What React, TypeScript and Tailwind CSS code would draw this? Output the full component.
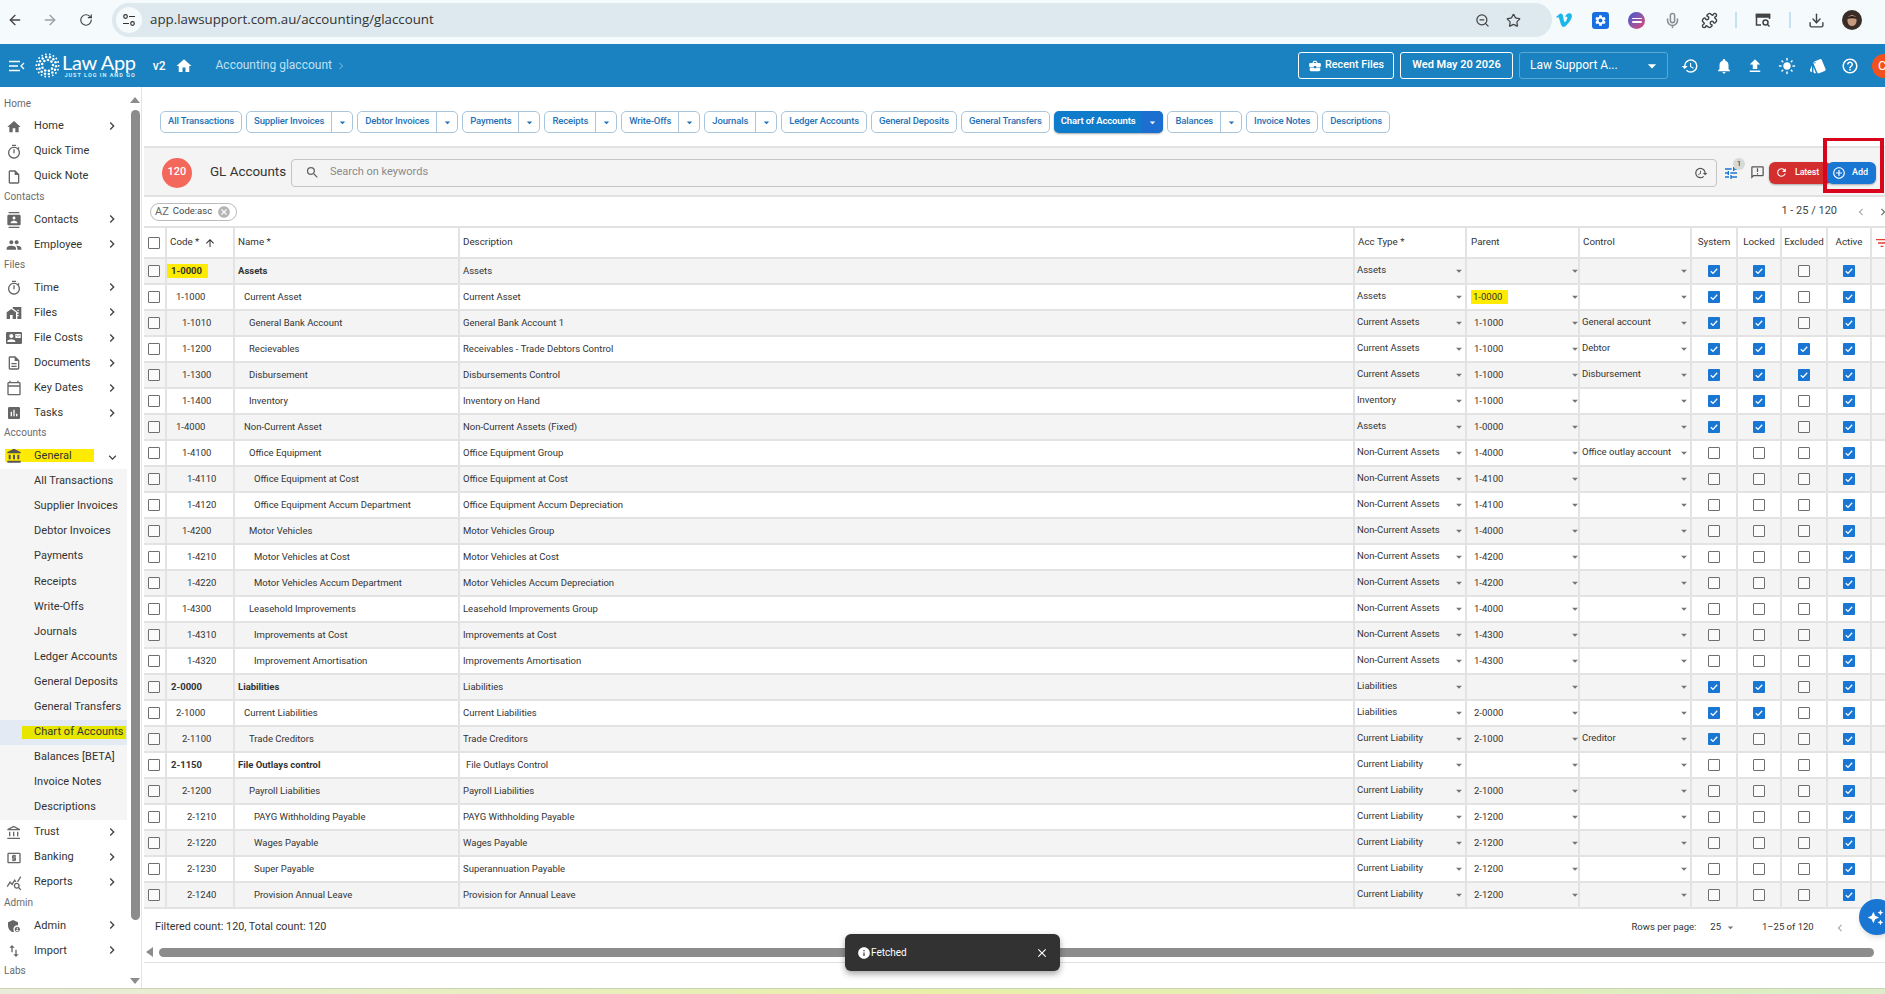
import { ArrowLeft, ArrowRight, Download, Mic, Puzzle, RotateCw, Star, ZoomOut } from "lucide-react";
import { FaVimeoV } from "react-icons/fa";
import {
  MdAccountBalance,
  MdAddCircleOutline,
  MdAdminPanelSettings,
  MdArrowDropDown,
  MdArrowUpward,
  MdAssessment,
  MdAutoAwesome,
  MdBusinessCenter,
  MdCancel,
  MdChevronLeft,
  MdChevronRight,
  MdClose,
  MdContactMail,
  MdContacts,
  MdExpandMore,
  MdFileUpload,
  MdFilterList,
  MdHelpOutline,
  MdHistory,
  MdHome,
  MdHomeWork,
  MdImportExport,
  MdInfo,
  MdLightMode,
  MdNotifications,
  MdOutlineAccountBalance,
  MdOutlineAnnouncement,
  MdOutlineCalendarToday,
  MdOutlineDescription,
  MdOutlineInsertDriveFile,
  MdOutlineLocalAtm,
  MdOutlineQueryStats,
  MdOutlineTimer,
  MdPeople,
  MdRefresh,
  MdSearch,
  MdSettings,
  MdStyle,
  MdTune,
} from "react-icons/md";
import type { IconType } from "react-icons";

type NavItem =
  | { kind: "label"; text: string }
  | { kind: "item"; text: string; icon: IconType; arrow?: boolean }
  | { kind: "group"; text: string; icon: IconType }
  | { kind: "sub"; text: string; active?: boolean };

const nav: NavItem[] = [
  { kind: "label", text: "Home" },
  { kind: "item", text: "Home", icon: MdHome, arrow: true },
  { kind: "item", text: "Quick Time", icon: MdOutlineTimer },
  { kind: "item", text: "Quick Note", icon: MdOutlineInsertDriveFile },
  { kind: "label", text: "Contacts" },
  { kind: "item", text: "Contacts", icon: MdContacts, arrow: true },
  { kind: "item", text: "Employee", icon: MdPeople, arrow: true },
  { kind: "label", text: "Files" },
  { kind: "item", text: "Time", icon: MdOutlineTimer, arrow: true },
  { kind: "item", text: "Files", icon: MdHomeWork, arrow: true },
  { kind: "item", text: "File Costs", icon: MdContactMail, arrow: true },
  { kind: "item", text: "Documents", icon: MdOutlineDescription, arrow: true },
  { kind: "item", text: "Key Dates", icon: MdOutlineCalendarToday, arrow: true },
  { kind: "item", text: "Tasks", icon: MdAssessment, arrow: true },
  { kind: "label", text: "Accounts" },
  { kind: "group", text: "General", icon: MdAccountBalance },
  { kind: "sub", text: "All Transactions" },
  { kind: "sub", text: "Supplier Invoices" },
  { kind: "sub", text: "Debtor Invoices" },
  { kind: "sub", text: "Payments" },
  { kind: "sub", text: "Receipts" },
  { kind: "sub", text: "Write-Offs" },
  { kind: "sub", text: "Journals" },
  { kind: "sub", text: "Ledger Accounts" },
  { kind: "sub", text: "General Deposits" },
  { kind: "sub", text: "General Transfers" },
  { kind: "sub", text: "Chart of Accounts", active: true },
  { kind: "sub", text: "Balances [BETA]" },
  { kind: "sub", text: "Invoice Notes" },
  { kind: "sub", text: "Descriptions" },
  { kind: "item", text: "Trust", icon: MdOutlineAccountBalance, arrow: true },
  { kind: "item", text: "Banking", icon: MdOutlineLocalAtm, arrow: true },
  { kind: "item", text: "Reports", icon: MdOutlineQueryStats, arrow: true },
  { kind: "label", text: "Admin" },
  { kind: "item", text: "Admin", icon: MdAdminPanelSettings, arrow: true },
  { kind: "item", text: "Import", icon: MdImportExport, arrow: true },
  { kind: "label", text: "Labs" },
];

const tabs = [
  { label: "All Transactions" },
  { label: "Supplier Invoices", split: true },
  { label: "Debtor Invoices", split: true },
  { label: "Payments", split: true },
  { label: "Receipts", split: true },
  { label: "Write-Offs", split: true },
  { label: "Journals", split: true },
  { label: "Ledger Accounts" },
  { label: "General Deposits" },
  { label: "General Transfers" },
  { label: "Chart of Accounts", split: true, active: true },
  { label: "Balances", split: true },
  { label: "Invoice Notes" },
  { label: "Descriptions" },
];

// code, name, description, acc type, parent, control, flags (system, locked, excluded, active), indent level
type Row = [string, string, string, string, string, string, string, number];

const CA = "Current Assets";
const NCA = "Non-Current Assets";
const CL = "Current Liability";

const rows: Row[] = [
  ["1-0000", "Assets", "Assets", "Assets", "", "", "1101", 0],
  ["1-1000", "Current Asset", "Current Asset", "Assets", "1-0000", "", "1101", 1],
  ["1-1010", "General Bank Account", "General Bank Account 1", CA, "1-1000", "General account", "1101", 2],
  ["1-1200", "Recievables", "Receivables - Trade Debtors Control", CA, "1-1000", "Debtor", "1111", 2],
  ["1-1300", "Disbursement", "Disbursements Control", CA, "1-1000", "Disbursement", "1111", 2],
  ["1-1400", "Inventory", "Inventory on Hand", "Inventory", "1-1000", "", "1101", 2],
  ["1-4000", "Non-Current Asset", "Non-Current Assets (Fixed)", "Assets", "1-0000", "", "1101", 1],
  ["1-4100", "Office Equipment", "Office Equipment Group", NCA, "1-4000", "Office outlay account", "0001", 2],
  ["1-4110", "Office Equipment at Cost", "Office Equipment at Cost", NCA, "1-4100", "", "0001", 3],
  ["1-4120", "Office Equipment Accum Department", "Office Equipment Accum Depreciation", NCA, "1-4100", "", "0001", 3],
  ["1-4200", "Motor Vehicles", "Motor Vehicles Group", NCA, "1-4000", "", "0001", 2],
  ["1-4210", "Motor Vehicles at Cost", "Motor Vehicles at Cost", NCA, "1-4200", "", "0001", 3],
  ["1-4220", "Motor Vehicles Accum Department", "Motor Vehicles Accum Depreciation", NCA, "1-4200", "", "0001", 3],
  ["1-4300", "Leasehold Improvements", "Leasehold Improvements Group", NCA, "1-4000", "", "0001", 2],
  ["1-4310", "Improvements at Cost", "Improvements at Cost", NCA, "1-4300", "", "0001", 3],
  ["1-4320", "Improvement Amortisation", "Improvements Amortisation", NCA, "1-4300", "", "0001", 3],
  ["2-0000", "Liabilities", "Liabilities", "Liabilities", "", "", "1101", 0],
  ["2-1000", "Current Liabilities", "Current Liabilities", "Liabilities", "2-0000", "", "1101", 1],
  ["2-1100", "Trade Creditors", "Trade Creditors", CL, "2-1000", "Creditor", "1001", 2],
  ["2-1150", "File Outlays control", "File Outlays Control", CL, "", "", "0001", 0],
  ["2-1200", "Payroll Liabilities", "Payroll Liabilities", CL, "2-1000", "", "0001", 2],
  ["2-1210", "PAYG Withholding Payable", "PAYG Withholding Payable", CL, "2-1200", "", "0001", 3],
  ["2-1220", "Wages Payable", "Wages Payable", CL, "2-1200", "", "0001", 3],
  ["2-1230", "Super Payable", "Superannuation Payable", CL, "2-1200", "", "0001", 3],
  ["2-1240", "Provision Annual Leave", "Provision for Annual Leave", CL, "2-1200", "", "0001", 3],
];

const indentCode = ["pl-[4px]", "pl-[9px]", "pl-[15px]", "pl-[20px]"];
const indentName = ["pl-[3px]", "pl-[9px]", "pl-[14px]", "pl-[19px]"];

const gridCols =
  "grid-cols-[23px_68px_225px_895px_112px_113px_112px_46px_44px_46px_44px_13px]";

function Logo() {
  const rings = [
    { r: 5.5, n: 9, s: 1.3 },
    { r: 8.6, n: 14, s: 1.25 },
    { r: 11.2, n: 18, s: 0.95 },
  ];
  return (
    <svg width="25" height="25" viewBox="-12.5 -12.5 25 25" fill="#fff">
      {rings.map((ring) =>
        Array.from({ length: ring.n }).map((_, i) => {
          const a = (i / ring.n) * Math.PI * 2 + ring.r;
          return (
            <circle
              key={`${ring.r}-${i}`}
              cx={Math.cos(a) * ring.r}
              cy={Math.sin(a) * ring.r}
              r={ring.s}
            />
          );
        })
      )}
    </svg>
  );
}

function Check({ on }: { on: boolean }) {
  if (on) {
    return (
      <span className="flex h-[12px] w-[12px] items-center justify-center rounded-[1px] bg-[#1976d2]">
        <svg width="10" height="10" viewBox="0 0 10 10" fill="none" stroke="#fff" strokeWidth="1.3">
          <path d="M1.8 5.2l2.2 2.2 4.2-4.6" />
        </svg>
      </span>
    );
  }
  return <span className="h-[12px] w-[12px] rounded-[1px] border border-[#6f6f6f] bg-white/60" />;
}

function SelectCell({
  value,
  mark,
  raised,
  inset,
}: {
  value: string;
  mark?: boolean;
  raised?: boolean;
  inset?: boolean;
}) {
  return (
    <div className="flex items-center justify-between border-r-2 border-[#e3e3e3]">
      <span
        className={`whitespace-nowrap ${inset ? "pl-[7px]" : "pl-[2px]"} ${raised ? "-mt-[2px]" : ""} ${mark ? "ml-[4px] bg-[#ffeb00] !pl-[2px] pr-[6px]" : ""}`}
      >
        {value}
      </span>
      <MdArrowDropDown
        size={14}
        className={`shrink-0 text-[#757575] ${inset ? "mr-[-4px]" : "mr-[-1px]"}`}
      />
    </div>
  );
}

function TableRow({ row, index }: { row: Row; index: number }) {
  const [code, name, desc, type, parent, control, flags, level] = row;
  const bold = level === 0;
  const markCode = code === "1-0000";
  const markParent = code === "1-1000";
  return (
    <div
      className={`grid h-[26px] ${gridCols} border-b-2 border-[#e3e3e3] text-[9.5px] text-[#333] ${index % 2 === 0 ? "bg-[#f4f4f4]" : "bg-white"}`}
    >
      <div className="flex items-center justify-center border-r-2 border-[#e3e3e3] pr-[1px]">
        <Check on={false} />
      </div>
      <div className={`flex items-center border-r-2 border-[#e3e3e3] ${indentCode[level]} ${bold ? "font-bold" : ""}`}>
        {markCode ? (
          <span className="-ml-[4px] w-[41px] bg-[#ffeb00] py-px pl-[4px] leading-[12px]">{code}</span>
        ) : (
          code
        )}
      </div>
      <div className={`flex items-center whitespace-nowrap border-r-2 border-[#e3e3e3] ${indentName[level]} ${bold ? "font-bold" : ""}`}>
        {name}
      </div>
      <div className={`flex items-center border-r-2 border-[#e3e3e3] ${code === "2-1150" ? "pl-[6px]" : "pl-[3px]"}`}>
        {desc}
      </div>
      <SelectCell value={type} raised />
      <SelectCell value={parent} mark={markParent} inset />
      <SelectCell value={control} raised />
      {flags.split("").map((f, i) => (
        <div key={i} className="flex items-center justify-center border-r-2 border-[#e3e3e3]">
          <Check on={f === "1"} />
        </div>
      ))}
      <div />
    </div>
  );
}

function Sidebar() {
  return (
    <aside className="flex w-[141px] shrink-0">
      <nav className="w-[127px] overflow-hidden whitespace-nowrap pt-[9px] text-[11px] tracking-[0.05px] text-[#333]">
        {nav.map((n, i) => {
          if (n.kind === "label") {
            return (
              <div key={i} className="flex h-[18px] items-center pb-[4px] pl-[4px] text-[10px] text-[#6b6b6b]">
                {n.text}
              </div>
            );
          }
          if (n.kind === "sub") {
            return (
              <div
                key={i}
                className={`flex h-[25.08px] items-center pl-[34px] ${n.active ? "bg-[#e4eaf3]" : "bg-[#f5f5f5]"}`}
              >
                {n.active ? (
                  <span className="-ml-[12px] flex h-[13px] w-[104px] items-center bg-[#e6e600] pl-[12px]">{n.text}</span>
                ) : (
                  n.text
                )}
              </div>
            );
          }
          const Icon = n.icon;
          if (n.kind === "group") {
            return (
              <div key={i} className="relative flex h-[25.08px] items-center pl-[6px]">
                <span className="absolute left-[5px] top-[5px] h-[13px] w-[89px] bg-[#ffeb00]" />
                <Icon size={16} className="relative text-[#555]" />
                <span className="relative ml-[12px]">{n.text}</span>
                <MdExpandMore size={15} className="absolute left-[105px] top-[6px] text-[#444]" />
              </div>
            );
          }
          return (
            <div key={i} className="relative flex h-[25.08px] items-center pl-[6px]">
              <Icon size={16} className="text-[#666]" />
              <span className="ml-[12px]">{n.text}</span>
              {n.arrow && <MdChevronRight size={16} className="absolute left-[104px] top-[4px] text-[#444]" />}
            </div>
          );
        })}
      </nav>
      <div className="flex w-[14px] flex-col items-center pl-[2px]">
        <span className="mt-[10px] h-0 w-0 border-x-[5px] border-b-[6px] border-x-transparent border-b-[#8c8c8c]" />
        <span className="mt-[7px] h-[810px] w-[9px] rounded-[5px] bg-[#8c8c8c]" />
        <span className="mt-[58px] h-0 w-0 border-x-[5px] border-t-[6px] border-x-transparent border-t-[#8c8c8c]" />
      </div>
    </aside>
  );
}

export default function App() {
  return (
    <div className="relative flex h-[994px] w-[1885px] flex-col overflow-hidden bg-white font-[Roboto,sans-serif]">
      {/* Browser chrome */}
      <div className="flex h-[44px] shrink-0 items-center bg-[#f5fafd] pb-[4px] text-[#444]">
        <ArrowLeft size={16} className="ml-[7px]" strokeWidth={2} />
        <ArrowRight size={16} className="ml-[19px] text-[#9aa0a6]" strokeWidth={2} />
        <RotateCw size={14} className="ml-[21px]" strokeWidth={2} />
        <div className="ml-[19px] flex h-[34px] w-[1440px] items-center rounded-[17px] bg-[#dde9ef]">
          <span className="ml-[4px] flex h-[26px] w-[26px] items-center justify-center rounded-full bg-[#f5fafd]">
            <svg width="14" height="14" viewBox="0 0 14 14" fill="none" stroke="#333" strokeWidth="1.2">
              <circle cx="3.5" cy="3.5" r="1.8" />
              <path d="M7 3.5h6M1 10.5h6" />
              <circle cx="10.5" cy="10.5" r="1.8" />
            </svg>
          </span>
          <span className="ml-[8px] font-['Open_Sans',sans-serif] text-[13.3px] text-[#333]">
            app.lawsupport.com.au/accounting/glaccount
          </span>
          <ZoomOut size={15} className="ml-auto" strokeWidth={2} />
          <Star size={15} className="ml-[16px] mr-[31px]" strokeWidth={2} />
        </div>
        <FaVimeoV size={18} className="ml-[3px] text-[#1ab7ea]" />
        <span className="ml-[19px] flex h-[17px] w-[17px] items-center justify-center rounded-[3px] bg-[#1a6fe0]">
          <MdSettings size={13} className="text-white" />
        </span>
        <span className="ml-[19px] flex h-[17px] w-[17px] flex-col items-center justify-center gap-[2px] rounded-full bg-linear-to-br from-[#2b4fd8] to-[#e0356f]">
          <span className="h-[1.5px] w-[10px] rounded bg-white" />
          <span className="h-[1.5px] w-[10px] rounded bg-white" />
        </span>
        <Mic size={17} className="ml-[19px] text-[#8a8f93]" strokeWidth={2.2} />
        <Puzzle size={17} className="ml-[20px]" strokeWidth={2} />
        <span className="ml-[17px] h-[16px] w-[2px] bg-[#c4e3ee]" />
        <svg width="16" height="16" viewBox="0 0 16 16" fill="none" stroke="#444" strokeWidth="1.5" className="ml-[18px]">
          <path d="M6 13H1.5V2.5h13V7" />
          <path d="M1.5 2.5h13v2.5h-13z" fill="#444" />
          <circle cx="10.5" cy="10.5" r="2.5" />
          <path d="M12.5 12.5l2 2" />
        </svg>
        <span className="ml-[18px] h-[16px] w-[2px] bg-[#c4e3ee]" />
        <Download size={17} className="ml-[17px]" strokeWidth={2} />
        <svg width="20" height="20" viewBox="0 0 20 20" className="ml-[17px]">
          <circle cx="10" cy="10" r="10" fill="#3a2c26" />
          <ellipse cx="10" cy="10.5" rx="4.6" ry="5.6" fill="#c79a80" />
          <path d="M5 9c1-4 9-4 10 0-3-1-7-1-10 0z" fill="#2a1e1a" />
        </svg>
      </div>

      {/* App bar */}
      <header className="flex h-[43px] shrink-0 items-center bg-[#1a82c0] text-white">
        <svg width="16" height="12" viewBox="0 0 16 12" fill="none" stroke="#fff" strokeWidth="1.3" className="ml-[9px]">
          <path d="M0 1.5h11M0 6h9M0 10.5h11M15 3l-3 3 3 3" />
        </svg>
        <span className="ml-[10px]">
          <Logo />
        </span>
        <div className="-mt-[2px] ml-[2px] flex flex-col">
          <span className="font-[Lato,sans-serif] text-[20px] leading-[20px] tracking-[-0.3px]">Law App</span>
          <span className="whitespace-nowrap text-right text-[5.5px] font-bold leading-[6px] tracking-[1px] text-[#d7ecf8]">JUST LOG IN AND GO</span>
        </div>
        <span className="ml-[17px] text-[12px] font-medium">v2</span>
        <MdHome size={18} className="ml-[9px]" />
        <span className="-mt-[2px] ml-[23px] text-[12px] text-[#bfe0f3]">Accounting glaccount</span>
        <MdChevronRight size={14} className="ml-[2px] text-[#5fa8d4]" />

        <button className="ml-auto flex h-[27px] w-[96px] items-center justify-center gap-[3px] rounded-[3px] border border-white text-[10.8px] font-medium">
          <MdBusinessCenter size={14} />
          Recent Files
        </button>
        <button className="ml-[6px] h-[27px] w-[113px] rounded-[3px] border border-white text-[11px] font-semibold">
          Wed May 20 2026
        </button>
        <div className="ml-[6px] flex h-[27px] w-[149px] items-center rounded-[3px] border border-[#5aa8d6] pl-[10px] text-[12px]">
          <span className="-mt-[2px]">Law Support A...</span>
          <MdArrowDropDown size={20} className="ml-auto mr-[5px]" />
        </div>
        <MdHistory size={18} className="ml-[13px]" />
        <MdNotifications size={18} className="ml-[16px]" />
        <MdFileUpload size={18} className="ml-[13px]" />
        <MdLightMode size={18} className="ml-[14px]" />
        <MdStyle size={18} className="ml-[13px]" />
        <MdHelpOutline size={18} className="ml-[14px]" />
        <span className="ml-[13px] flex h-[24px] w-[13px] items-center overflow-hidden rounded-l-[12px] bg-[#f4511e] pl-[6px] text-[13px]">
          C
        </span>
      </header>

      {/* Main */}
      <div className="flex h-[901px] shrink-0">
        <Sidebar />

        <main className="flex min-w-0 flex-1 flex-col border-l border-[#e4e4e4] pl-[2px]">
          {/* Tabs */}
          <div className="flex h-[59px] shrink-0 gap-[4px] pl-[16px] pt-[24px]">
            {tabs.map((t) => (
              <div
                key={t.label}
                className={`flex h-[22px] items-center rounded-[5px] text-[9.5px] font-medium tracking-[-0.15px] ${
                  t.active
                    ? "bg-[#0e7ccb] font-semibold text-white shadow-[0_1px_2px_rgba(0,0,0,0.35)]"
                    : "border border-[#a9c6dc] text-[#1f72b6]"
                }`}
              >
                <span className="px-[7px] pb-[1px]">{t.label}</span>
                {t.split && (
                  <span
                    className={`flex h-full w-[21px] items-center justify-center ${
                      t.active ? "rounded-r-[5px] bg-[#1c6fd0]" : "border-l border-[#a9c6dc]"
                    }`}
                  >
                    <MdArrowDropDown size={13} />
                  </span>
                )}
              </div>
            ))}
          </div>

          {/* Panel header */}
          <div className="flex h-[51px] shrink-0 items-center border-y-2 border-[#e2e2e2] bg-[#f4f4f4] pl-[18px] pt-[2px]">
            <span className="flex h-[30px] w-[30px] items-center justify-center rounded-full bg-[#f4685c] text-[11px] font-medium text-white">
              120
            </span>
            <span className="ml-[18px] w-[81px] text-[13.4px] text-[#333]">GL Accounts</span>
            <div className="flex h-[28px] w-[1426px] items-center rounded-[4px] border border-[#c4c4c4] pl-[13px] text-[11px] text-[#8a8a8a]">
              <MdSearch size={15} className="text-[#666]" />
              <span className="ml-[10px]">Search on keywords</span>
              <MdHistory size={14} className="ml-auto mr-[8px] -scale-x-100 text-[#555]" />
            </div>
            <div className="relative ml-[6px]">
              <MdTune size={16} className="text-[#1976d2]" />
              <span className="absolute -top-[7px] left-[10px] flex h-[12px] w-[12px] items-center justify-center rounded-full bg-[#d9d9d9] text-[8px] text-[#333]">
                1
              </span>
            </div>
            <MdOutlineAnnouncement size={15} className="ml-[11px] text-[#555]" />
            <button className="relative ml-[4px] flex h-[22px] w-[62px] items-center rounded-[6px] bg-[#d32f2f] pl-[6px] text-[9px] font-medium tracking-[-0.2px] text-white shadow-[0_1px_2px_rgba(0,0,0,0.3)]">
              <MdRefresh size={13} />
              <span className="ml-[7px]">Latest</span>
            </button>
            <button className="relative -ml-[4px] flex h-[22px] w-[49px] items-center rounded-[6px] bg-[#1976d2] pl-[5px] text-[9px] font-medium text-white shadow-[0_1px_2px_rgba(0,0,0,0.3)]">
              <MdAddCircleOutline size={14} />
              <span className="ml-[6px]">Add</span>
            </button>
          </div>

          {/* Sort chip + pager */}
          <div className="flex h-[31px] shrink-0 items-center border-b-2 border-[#e2e2e2] pl-[6px] text-[#444]">
            <div className="flex h-[18px] w-[87px] items-center rounded-[9px] border border-[#bbb] pl-[4px] text-[9.5px]">
              <span className="text-[11px] leading-none text-[#666]">AZ</span>
              <span className="ml-[4px]">Code:asc</span>
              <MdCancel size={14} className="ml-auto mr-[5px] text-[#b5b5b5]" />
            </div>
            <span className="ml-auto text-[11px]">1 - 25 / 120</span>
            <MdChevronLeft size={14} className="ml-[17px] text-[#aaa]" />
            <MdChevronRight size={14} className="ml-[8px] mr-[-5px] text-[#666]" />
          </div>

          {/* Table */}
          <div className={`grid h-[31px] shrink-0 ${gridCols} border-b-2 border-[#e3e3e3] text-[9.8px] text-[#333]`}>
            <div className="flex items-center justify-center border-r-2 border-[#e3e3e3] pr-[1px]">
              <Check on={false} />
            </div>
            <div className="flex items-center border-r-2 border-[#e3e3e3] pl-[3px]">
              Code *
              <MdArrowUpward size={12} className="ml-[5px]" />
            </div>
            <div className="flex items-center border-r-2 border-[#e3e3e3] pl-[3px]">Name *</div>
            <div className="flex items-center border-r-2 border-[#e3e3e3] pl-[3px]">Description</div>
            <div className="flex items-center border-r-2 border-[#e3e3e3] pl-[3px]">Acc Type *</div>
            <div className="flex items-center border-r-2 border-[#e3e3e3] pl-[4px]">Parent</div>
            <div className="flex items-center border-r-2 border-[#e3e3e3] pl-[3px]">Control</div>
            <div className="flex items-center justify-center border-r-2 border-[#e3e3e3]">System</div>
            <div className="flex items-center justify-center border-r-2 border-[#e3e3e3]">Locked</div>
            <div className="flex items-center justify-center border-r-2 border-[#e3e3e3]">Excluded</div>
            <div className="flex items-center justify-center border-r-2 border-[#e3e3e3]">Active</div>
            <div className="flex items-center overflow-hidden">
              <MdFilterList size={16} className="ml-[2px] shrink-0 text-[#e53935]" />
            </div>
          </div>
          {rows.map((row, i) => (
            <TableRow key={row[0]} row={row} index={i} />
          ))}

          {/* Footer */}
          <div className="flex h-[37px] shrink-0 items-center whitespace-nowrap pl-[11px] text-[9.5px] text-[#333]">
            <span className="text-[10.8px]">Filtered count: 120, Total count: 120</span>
            <span className="ml-auto">Rows per page:</span>
            <span className="ml-[14px]">25</span>
            <MdArrowDropDown size={13} className="ml-[3px] text-[#777]" />
            <span className="ml-[25px] w-[49px]">1–25 of 120</span>
            <MdChevronLeft size={14} className="ml-[22px] mr-[38px] text-[#aaa]" />
          </div>

          {/* Horizontal scrollbar */}
          <div className="flex h-[17px] shrink-0 items-center border-b border-[#e2e2e2] pb-[4px] pl-[2px]">
            <span className="h-0 w-0 border-y-[5px] border-r-[7px] border-y-transparent border-r-[#8c8c8c]" />
            <span className="ml-[6px] h-[9px] w-[1715px] rounded-[5px] bg-[#8c8c8c]" />
          </div>
        </main>
      </div>

      {/* Desktop strip below the window */}
      <div className="h-[6px] shrink-0 border-t border-[#c9d3b5] bg-linear-to-r from-[#e9ecd9] via-[#e8f0a8] to-[#dcedc8]" />

      {/* Red annotation around Add */}
      <div className="absolute left-[1823px] top-[138px] h-[55px] w-[61px] border-[4px] border-t-[3px] border-[#d8051c]" />

      {/* Assistant button */}
      <button className="absolute left-[1859px] top-[899px] flex h-[36px] w-[36px] items-center rounded-full bg-[#1976d2] pl-[8px] text-white shadow-md">
        <MdAutoAwesome size={17} />
      </button>

      {/* Toast */}
      <div className="absolute left-[845px] top-[934px] flex h-[37px] w-[215px] items-center rounded-[6px] bg-[#323232] pl-[12px] text-[10px] text-white shadow-[0_3px_6px_rgba(0,0,0,0.35)]">
        <MdInfo size={14} />
        Fetched
        <MdClose size={14} className="ml-auto mr-[11px]" />
      </div>
    </div>
  );
}
